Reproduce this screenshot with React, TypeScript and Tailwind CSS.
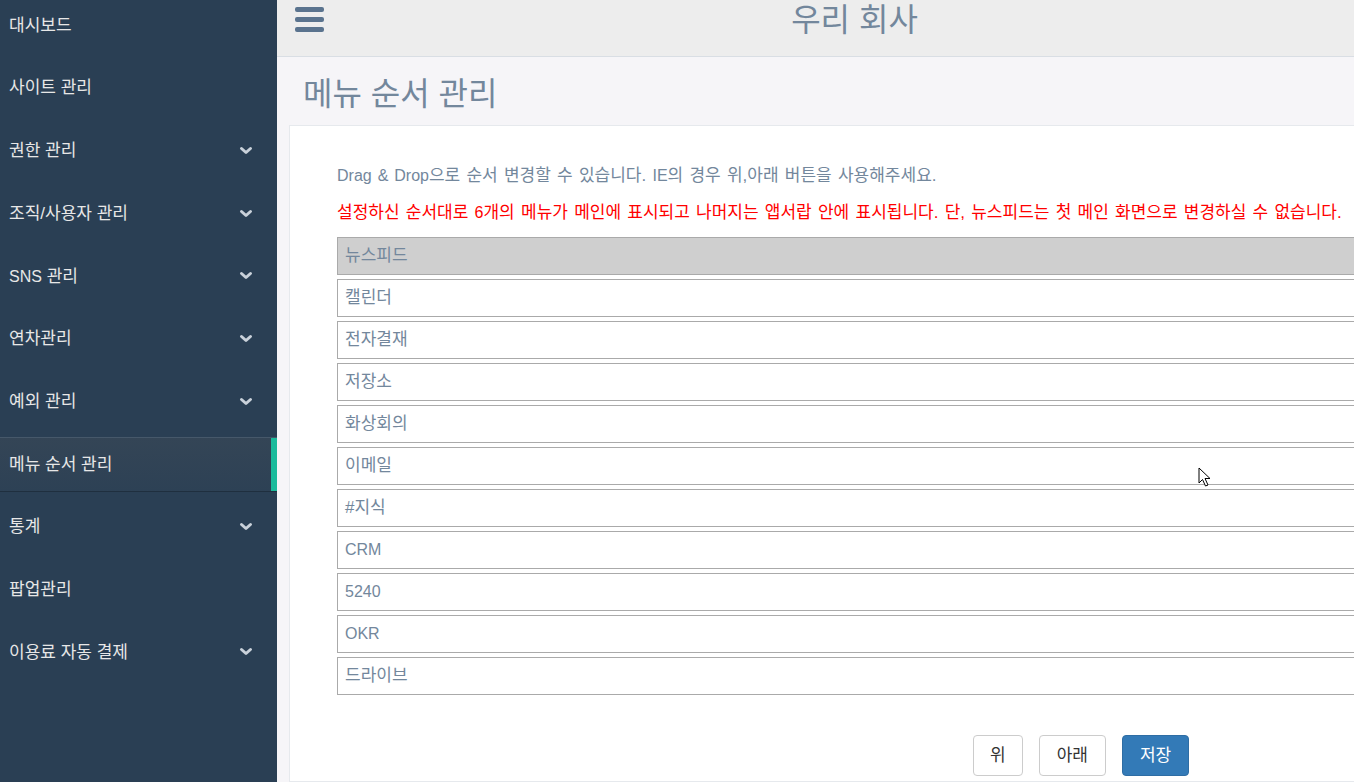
import React from "react";

const FONT = { fontFamily: '"Liberation Sans", "Noto Sans CJK KR", sans-serif' };

const navItems: { label: React.ReactNode; key: string; chevron?: boolean; active?: boolean }[] = [
  { key: "a", label: "대시보드" },
  { key: "b", label: "사이트 관리" },
  { key: "c", label: "권한 관리", chevron: true },
  { key: "d", label: "조직/사용자 관리", chevron: true },
  { key: "e", label: <><span className="text-[16px]">SNS</span> 관리</>, chevron: true },
  { key: "f", label: "연차관리", chevron: true },
  { key: "g", label: "예외 관리", chevron: true },
  { key: "h", label: "메뉴 순서 관리", active: true },
  { key: "i", label: "통계", chevron: true },
  { key: "j", label: "팝업관리" },
  { key: "k", label: "이용료 자동 결제", chevron: true },
];

const menus = ["뉴스피드", "캘린더", "전자결재", "저장소", "화상회의", "이메일", "#지식", "CRM", "5240", "OKR", "드라이브"];

function Chevron() {
  return (
    <svg width="14" height="10" viewBox="0 0 14 10" className="text-[#c9d1da]">
      <polyline points="2.5,2.5 7,6.5 11.5,2.5" fill="none" stroke="currentColor" strokeWidth="3" strokeLinecap="round" strokeLinejoin="round" />
    </svg>
  );
}

export default function App() {
  return (
    <div className="flex h-[782px] w-[1354px] overflow-hidden bg-[#f6f5f8]" style={FONT}>
      <aside className="w-[277px] shrink-0 bg-[#2a3f54] overflow-hidden">
        <ul className="mt-[-2px] flex flex-col gap-[7.7px]">
          {navItems.map((it) => (
            <li
              key={it.key}
              className={
                "relative flex h-[55px] items-center pl-[9px] pr-[24px] text-[17px] text-[#e7e7e7] " +
                (it.active
                  ? "border-t border-t-[#46586a] border-b border-b-[#1f2f3f] bg-gradient-to-b from-[#344556] to-[#2d4155]"
                  : "")
              }
            >
              <span className="flex-1">{it.label}</span>
              {it.chevron && <Chevron />}
              {it.active && <span className="absolute right-0 top-0 h-full w-[6px] bg-[#1abb9c]" />}
            </li>
          ))}
        </ul>
      </aside>
      <main className="flex min-w-0 flex-1 flex-col">
        <header className="relative flex h-[57px] shrink-0 items-start border-b border-[#d9dee4] bg-[#ededed]">
          <div className="w-[78px] shrink-0 pl-[18px] pt-[7px]">
            <div className="flex w-[29px] flex-col gap-[5px]">
              <span className="h-[5px] rounded-[2px] bg-[#5a738e]" />
              <span className="h-[5px] rounded-[2px] bg-[#5a738e]" />
              <span className="h-[5px] rounded-[2px] bg-[#5a738e]" />
            </div>
          </div>
          <div className="flex-1 text-center text-[32px] leading-[40px] text-[#73879c]">우리 회사</div>
        </header>
        <h1 className="ml-[26px] mt-[19px] mb-[12px] text-[32px] leading-[37px] font-normal text-[#73879c]">메뉴 순서 관리</h1>
        <section className="ml-[12px] w-[1120px] flex-1 border border-[#e6e9ed] bg-white pl-[47px] pt-[39px]">
          <p className="text-[17px] leading-[22px] text-[#73879c] [word-spacing:1.5px]">
            <span className="text-[16px]">Drag &amp; Drop</span>으로 순서 변경할 수 있습니다. <span className="text-[16px]">IE</span>의 경우 위,아래 버튼을 사용해주세요.
          </p>
          <p className="mt-[15px] text-[17px] leading-[22px] text-[#ff0000] [word-spacing:1.5px]">
            설정하신 순서대로 <span className="text-[16px]">6</span>개의 메뉴가 메인에 표시되고 나머지는 앱서랍 안에 표시됩니다. 단, 뉴스피드는 첫 메인 화면으로 변경하실 수 없습니다.
          </p>
          <ul className="mt-[13px] flex flex-col gap-[4px]">
            {menus.map((m, i) => (
              <li
                key={m}
                className={
                  "flex h-[38px] items-center border border-[#aaaaaa] pl-[7px] text-[#73879c] " +
                  (/^[A-Z0-9]+$/.test(m) ? "text-[16px] " : "text-[17px] ") +
                  (i === 0 ? "bg-[#cfcfcf]" : "bg-white")
                }
              >
                {m}
              </li>
            ))}
          </ul>
          <div className="relative mt-[40px] ml-[636px] flex gap-[16px]">
            <button className="h-[41px] rounded-[4px] border border-[#cccccc] bg-white px-[16px] text-[17px] text-[#333333]">위</button>
            <button className="h-[41px] rounded-[4px] border border-[#cccccc] bg-white px-[17px] text-[17px] text-[#333333]">아래</button>
            <button className="h-[41px] rounded-[4px] border border-[#2e6da4] bg-[#337ab7] px-[17px] text-[17px] text-white">저장</button>
          </div>
        </section>
      </main>
      <svg className="pointer-events-none absolute left-[1198px] top-[467px]" width="14" height="22" viewBox="0 0 14 22">
        <path d="M1 1 L1 16 L4.5 12.5 L7.5 19 L10 18 L7 11.5 L12 11.5 Z" fill="white" stroke="black" strokeWidth="1" />
      </svg>
    </div>
  );
}
